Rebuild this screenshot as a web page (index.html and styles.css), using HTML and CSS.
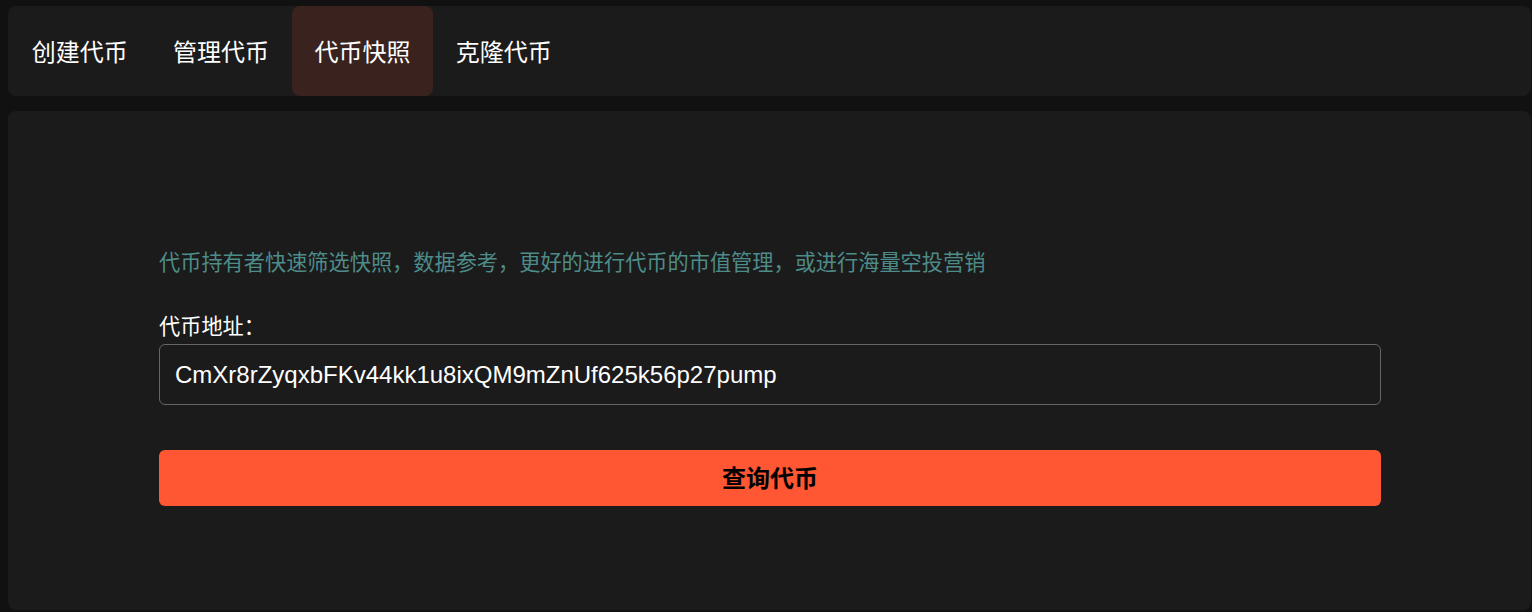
FILE: index.html
```html
<!DOCTYPE html>
<html lang="zh-CN">
<head>
<meta charset="utf-8">
<title>代币快照</title>
<link rel="stylesheet" href="styles.css">
</head>
<body>
<div class="page">
  <nav class="tabs">
    <a class="tab">创建代币</a>
    <a class="tab">管理代币</a>
    <a class="tab active">代币快照</a>
    <a class="tab">克隆代币</a>
  </nav>
  <main class="card">
    <p class="desc">代币持有者快速筛选快照，数据参考，更好的进行代币的市值管理，或进行海量空投营销</p>
    <label class="label" for="addr">代币地址：</label>
    <input class="input" id="addr" type="text" value="CmXr8rZyqxbFKv44kk1u8ixQM9mZnUf625k56p27pump">
    <button class="btn" type="button">查询代币</button>
  </main>
</div>
</body>
</html>
```

FILE: styles.css
```css
html, body {
  margin: 0;
  padding: 0;
  background: #111111;
  height: 100%;
}
body {
  font-family: "Microsoft YaHei", "Noto Sans CJK SC", "Noto Sans", sans-serif;
  color: #ffffff;
  overflow: hidden;
}
.page {
  display: flex;
  flex-direction: column;
  gap: 15px;
  padding: 6px 1px 0 8px;
}
.tabs {
  display: flex;
  height: 90px;
  background: #1b1b1b;
  border-radius: 8px;
  padding-left: 1px;
}
.tab {
  display: flex;
  align-items: center;
  padding: 0 22.7px 2px;
  font-size: 24px;
  color: #ffffff;
  border-radius: 8px;
  cursor: pointer;
}
.tab.active {
  background: #3a231e;
}
.card {
  display: flex;
  flex-direction: column;
  background: #1b1b1b;
  border-radius: 8px;
  padding: 135px 150px 104px 151px;
}
.desc {
  margin: 0;
  font-size: 21.2px;
  line-height: 30px;
  color: #4e8c89;
}
.label {
  margin-top: 34px;
  font-size: 21.2px;
  line-height: 30px;
  color: #ffffff;
}
.input {
  margin-top: 4px;
  height: 61px;
  box-sizing: border-box;
  background: transparent;
  border: 1px solid #666666;
  border-radius: 6px;
  padding: 0 15px;
  font-family: "Liberation Sans", Arial, sans-serif;
  font-size: 24px;
  color: #ffffff;
  outline: none;
}
.btn {
  margin-top: 45px;
  height: 56px;
  border: none;
  border-radius: 6px;
  padding: 0 0 4px;
  background: #ff5733;
  color: #000000;
  font-family: "Microsoft YaHei", "Noto Sans CJK SC", sans-serif;
  font-size: 24px;
  font-weight: 700;
  cursor: pointer;
}
```
